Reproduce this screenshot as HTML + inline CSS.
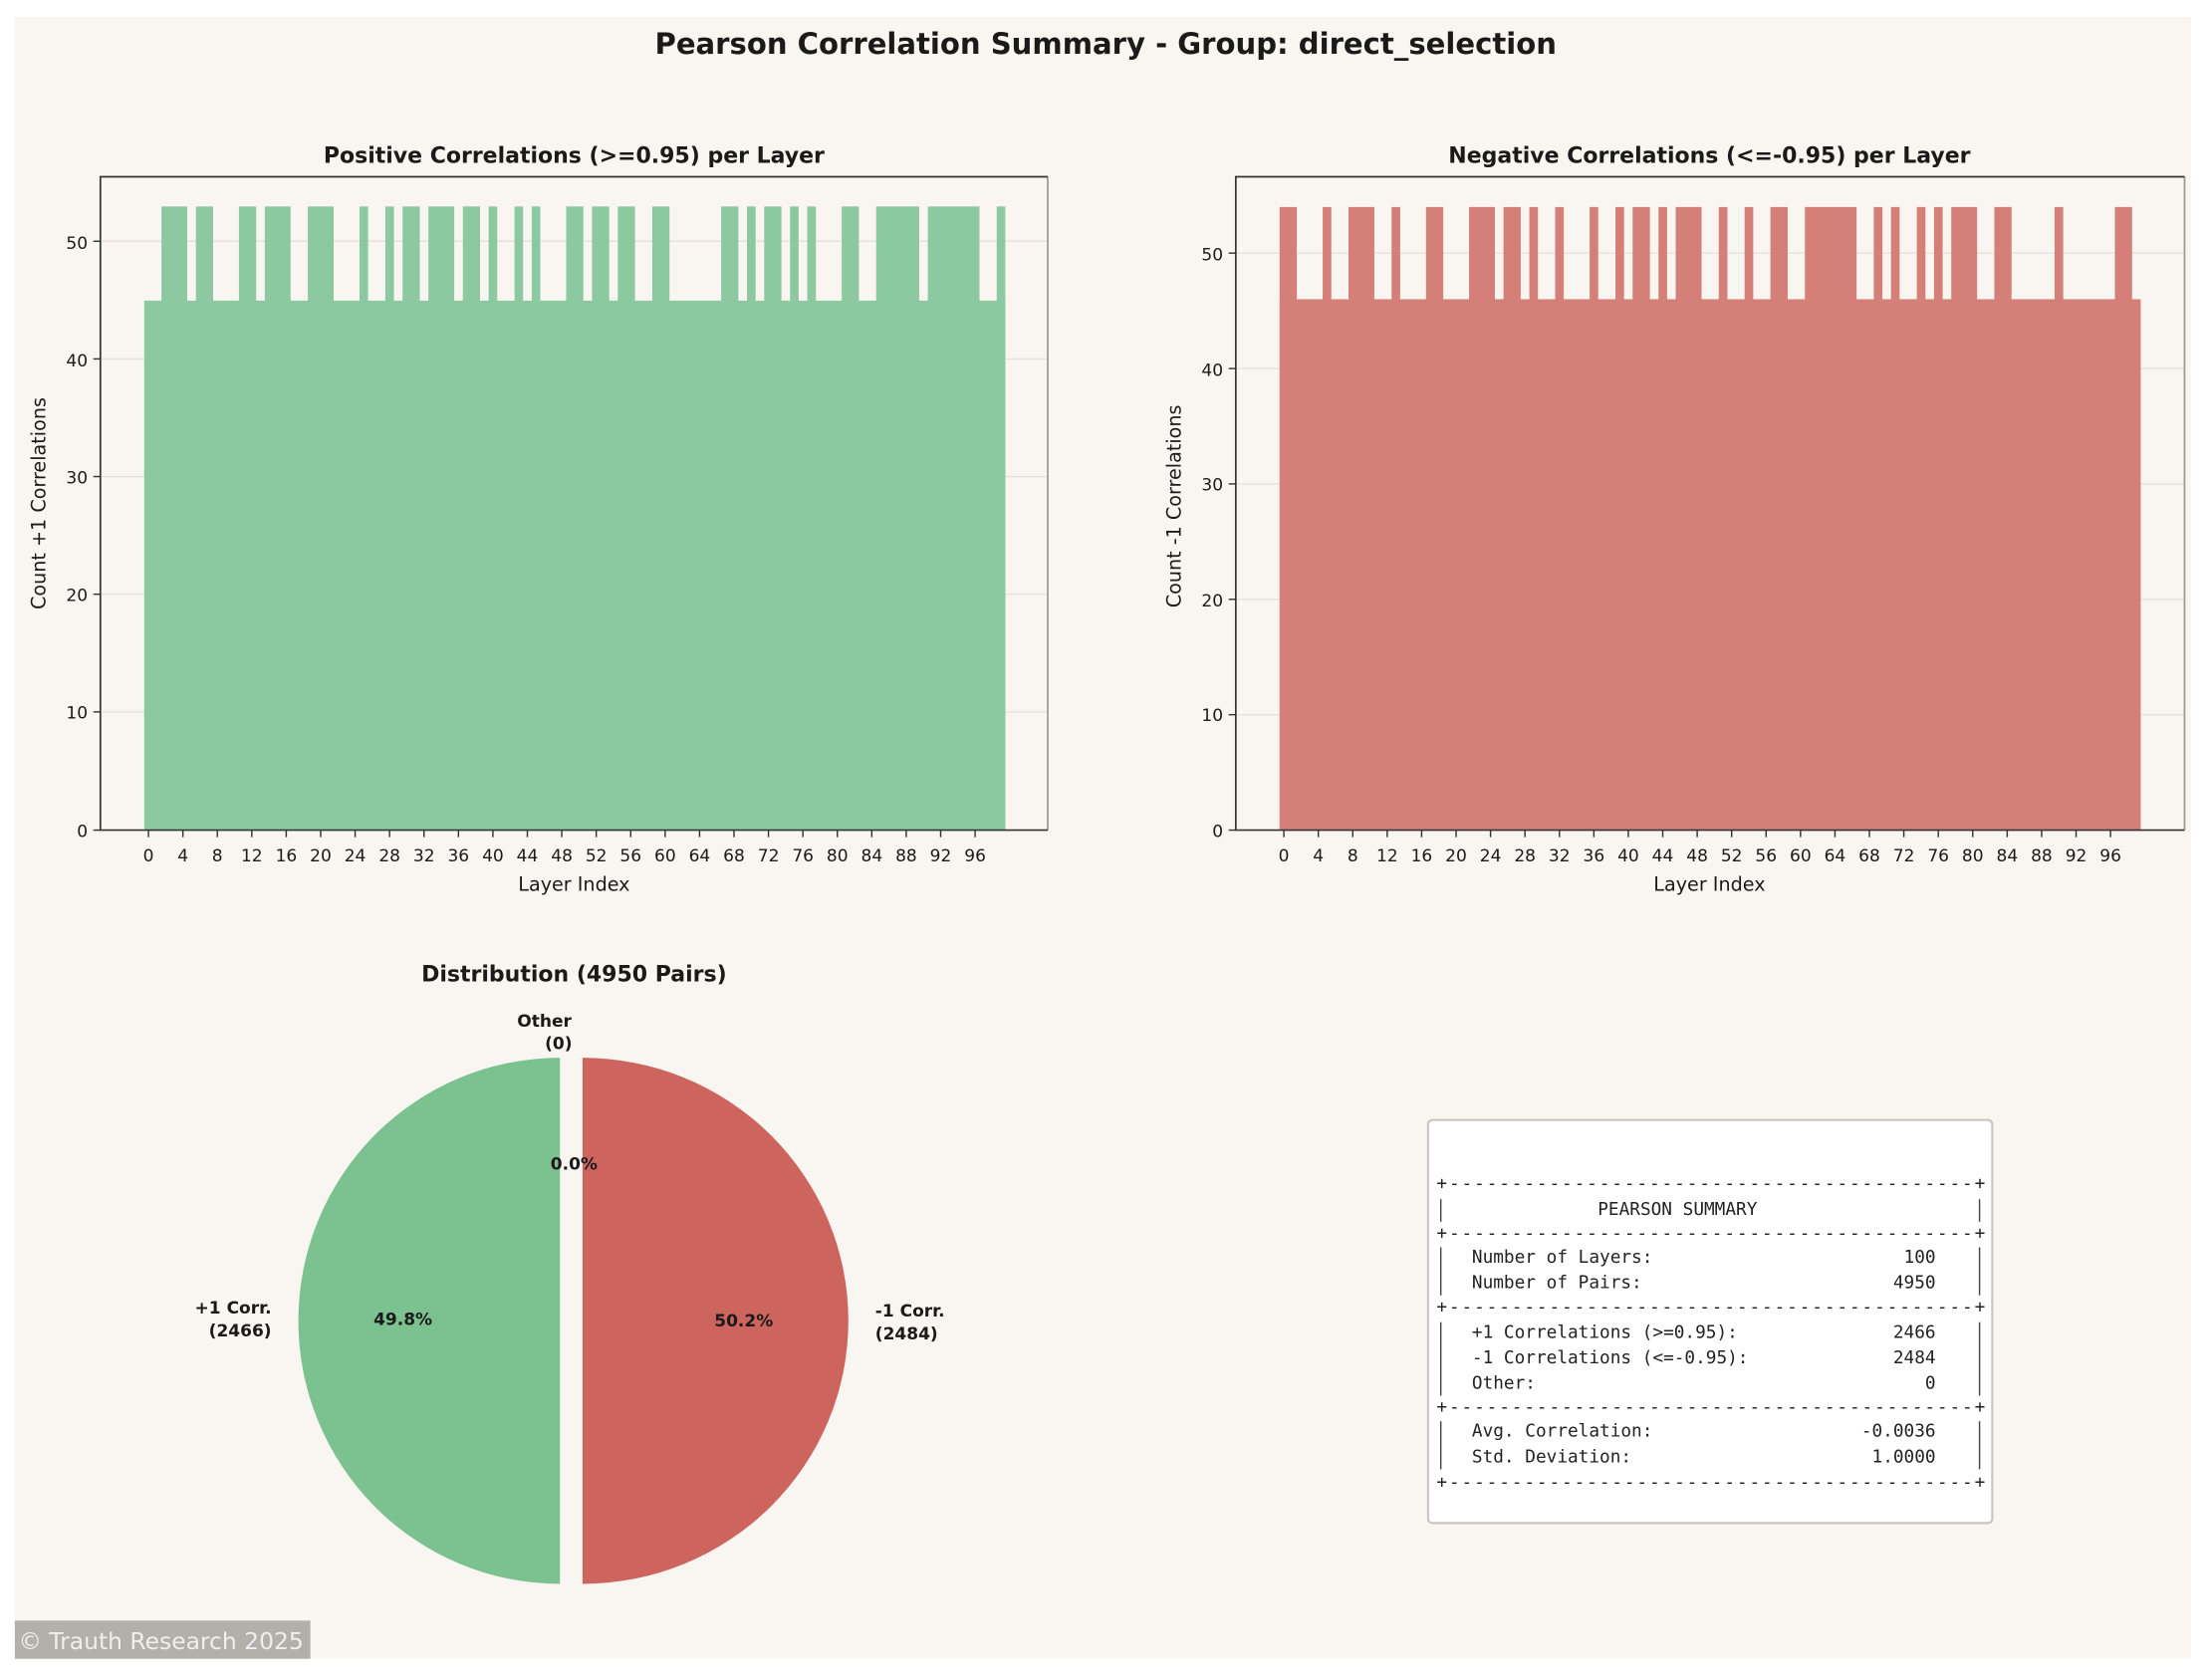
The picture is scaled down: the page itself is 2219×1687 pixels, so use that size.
<!DOCTYPE html>
<html><head><meta charset="utf-8"><style>
html,body{margin:0;padding:0;background:#fff;}
svg{display:block;}
text{font-family:"DejaVu Sans","Liberation Sans",sans-serif;fill:#1a1a1a;}
.mono text{font-family:"DejaVu Sans Mono","Liberation Mono",monospace;font-size:12.5px;fill:#222;}
.tk{font-size:12px;fill:#333;}
</style></head><body>
<svg width="2219" height="1687" viewBox="0 0 1563 1188" preserveAspectRatio="none" xmlns="http://www.w3.org/2000/svg">
<rect x="0" y="0" width="1563" height="1188" fill="#ffffff"/>
<rect x="10.5" y="12" width="1539" height="1160.7" fill="#f9f5f0"/>
<text x="782" y="38" text-anchor="middle" font-size="20.5" font-weight="bold">Pearson Correlation Summary - Group: direct_selection</text>

<!-- LEFT PLOT -->
<text x="406" y="115" text-anchor="middle" font-size="15.5" font-weight="bold">Positive Correlations (&gt;=0.95) per Layer</text>
<g stroke="#e6e1dc" stroke-width="1">
<line x1="71" x2="741" y1="170.6" y2="170.6"/><line x1="71" x2="741" y1="253.8" y2="253.8"/><line x1="71" x2="741" y1="337" y2="337"/><line x1="71" x2="741" y1="420.2" y2="420.2"/><line x1="71" x2="741" y1="503.4" y2="503.4"/>
</g>
<g fill="#8dc9a0" transform="translate(102,0) scale(6.09,1)">
<rect x="0" y="212.6" width="100" height="374.4"/>
<rect x="2" width="3" y="146" height="441"/><rect x="6" width="2" y="146" height="441"/><rect x="11" width="2" y="146" height="441"/><rect x="14" width="3" y="146" height="441"/><rect x="19" width="3" y="146" height="441"/><rect x="25" width="1" y="146" height="441"/><rect x="28" width="1" y="146" height="441"/><rect x="30" width="2" y="146" height="441"/><rect x="33" width="3" y="146" height="441"/><rect x="37" width="2" y="146" height="441"/><rect x="40" width="1" y="146" height="441"/><rect x="43" width="1" y="146" height="441"/><rect x="45" width="1" y="146" height="441"/><rect x="49" width="2" y="146" height="441"/><rect x="52" width="2" y="146" height="441"/><rect x="55" width="2" y="146" height="441"/><rect x="59" width="2" y="146" height="441"/><rect x="67" width="2" y="146" height="441"/><rect x="70" width="1" y="146" height="441"/><rect x="72" width="2" y="146" height="441"/><rect x="75" width="1" y="146" height="441"/><rect x="77" width="1" y="146" height="441"/><rect x="81" width="2" y="146" height="441"/><rect x="85" width="5" y="146" height="441"/><rect x="91" width="6" y="146" height="441"/><rect x="99" width="1" y="146" height="441"/>
</g>
<g fill="none" stroke-width="1.2">
<path d="M741,125 L741,587" stroke="#999"/>
<path d="M741,125 L71,125 L71,587 L741,587" stroke="#333"/>
</g>
<g stroke="#333" stroke-width="1">
<line x1="66" x2="71" y1="587" y2="587"/><line x1="66" x2="71" y1="503.4" y2="503.4"/><line x1="66" x2="71" y1="420.2" y2="420.2"/><line x1="66" x2="71" y1="337" y2="337"/><line x1="66" x2="71" y1="253.8" y2="253.8"/><line x1="66" x2="71" y1="170.6" y2="170.6"/>
</g>
<g class="tk" text-anchor="end">
<text x="62" y="592">0</text><text x="62" y="508">10</text><text x="62" y="425">20</text><text x="62" y="342">30</text><text x="62" y="259">40</text><text x="62" y="176">50</text>
</g>
<g transform="translate(105,0)">
<g stroke="#333" stroke-width="1">
<line x1="0" x2="0" y1="587" y2="592"/><line x1="24.36" x2="24.36" y1="587" y2="592"/><line x1="48.72" x2="48.72" y1="587" y2="592"/><line x1="73.08" x2="73.08" y1="587" y2="592"/><line x1="97.44" x2="97.44" y1="587" y2="592"/><line x1="121.8" x2="121.8" y1="587" y2="592"/><line x1="146.16" x2="146.16" y1="587" y2="592"/><line x1="170.52" x2="170.52" y1="587" y2="592"/><line x1="194.88" x2="194.88" y1="587" y2="592"/><line x1="219.24" x2="219.24" y1="587" y2="592"/><line x1="243.6" x2="243.6" y1="587" y2="592"/><line x1="267.96" x2="267.96" y1="587" y2="592"/><line x1="292.32" x2="292.32" y1="587" y2="592"/><line x1="316.68" x2="316.68" y1="587" y2="592"/><line x1="341.04" x2="341.04" y1="587" y2="592"/><line x1="365.4" x2="365.4" y1="587" y2="592"/><line x1="389.76" x2="389.76" y1="587" y2="592"/><line x1="414.12" x2="414.12" y1="587" y2="592"/><line x1="438.48" x2="438.48" y1="587" y2="592"/><line x1="462.84" x2="462.84" y1="587" y2="592"/><line x1="487.2" x2="487.2" y1="587" y2="592"/><line x1="511.56" x2="511.56" y1="587" y2="592"/><line x1="535.92" x2="535.92" y1="587" y2="592"/><line x1="560.28" x2="560.28" y1="587" y2="592"/><line x1="584.64" x2="584.64" y1="587" y2="592"/>
</g>
<g class="tk" text-anchor="middle">
<text x="0" y="609">0</text><text x="24.36" y="609">4</text><text x="48.72" y="609">8</text><text x="73.08" y="609">12</text><text x="97.44" y="609">16</text><text x="121.8" y="609">20</text><text x="146.16" y="609">24</text><text x="170.52" y="609">28</text><text x="194.88" y="609">32</text><text x="219.24" y="609">36</text><text x="243.6" y="609">40</text><text x="267.96" y="609">44</text><text x="292.32" y="609">48</text><text x="316.68" y="609">52</text><text x="341.04" y="609">56</text><text x="365.4" y="609">60</text><text x="389.76" y="609">64</text><text x="414.12" y="609">68</text><text x="438.48" y="609">72</text><text x="462.84" y="609">76</text><text x="487.2" y="609">80</text><text x="511.56" y="609">84</text><text x="535.92" y="609">88</text><text x="560.28" y="609">92</text><text x="584.64" y="609">96</text>
</g></g>
<text x="406" y="630" text-anchor="middle" font-size="13.5" fill="#333">Layer Index</text>
<text transform="translate(32,356) rotate(-90)" text-anchor="middle" font-size="13.5" fill="#333">Count +1 Correlations</text>

<!-- RIGHT PLOT -->
<text x="1209" y="115" text-anchor="middle" font-size="15.5" font-weight="bold">Negative Correlations (&lt;=-0.95) per Layer</text>
<g stroke="#e6e1dc" stroke-width="1">
<line x1="874" x2="1545" y1="179" y2="179"/><line x1="874" x2="1545" y1="260.6" y2="260.6"/><line x1="874" x2="1545" y1="342.2" y2="342.2"/><line x1="874" x2="1545" y1="423.8" y2="423.8"/><line x1="874" x2="1545" y1="505.4" y2="505.4"/>
</g>
<g fill="#d57f79" transform="translate(905,0) scale(6.09,1)">
<rect x="0" y="211.6" width="100" height="375.4"/>
<rect x="0" width="2" y="146.4" height="440.6"/><rect x="5" width="1" y="146.4" height="440.6"/><rect x="8" width="3" y="146.4" height="440.6"/><rect x="13" width="1" y="146.4" height="440.6"/><rect x="17" width="2" y="146.4" height="440.6"/><rect x="22" width="3" y="146.4" height="440.6"/><rect x="26" width="2" y="146.4" height="440.6"/><rect x="29" width="1" y="146.4" height="440.6"/><rect x="32" width="1" y="146.4" height="440.6"/><rect x="36" width="1" y="146.4" height="440.6"/><rect x="39" width="1" y="146.4" height="440.6"/><rect x="41" width="2" y="146.4" height="440.6"/><rect x="44" width="1" y="146.4" height="440.6"/><rect x="46" width="3" y="146.4" height="440.6"/><rect x="51" width="1" y="146.4" height="440.6"/><rect x="54" width="1" y="146.4" height="440.6"/><rect x="57" width="2" y="146.4" height="440.6"/><rect x="61" width="6" y="146.4" height="440.6"/><rect x="69" width="1" y="146.4" height="440.6"/><rect x="71" width="1" y="146.4" height="440.6"/><rect x="74" width="1" y="146.4" height="440.6"/><rect x="76" width="1" y="146.4" height="440.6"/><rect x="78" width="3" y="146.4" height="440.6"/><rect x="83" width="2" y="146.4" height="440.6"/><rect x="90" width="1" y="146.4" height="440.6"/><rect x="97" width="2" y="146.4" height="440.6"/>
</g>
<g fill="none" stroke-width="1.2">
<path d="M1545,125 L1545,587" stroke="#999"/>
<path d="M1545,125 L874,125 L874,587 L1545,587" stroke="#333"/>
</g>
<g stroke="#333" stroke-width="1">
<line x1="869" x2="874" y1="587" y2="587"/><line x1="869" x2="874" y1="505.4" y2="505.4"/><line x1="869" x2="874" y1="423.8" y2="423.8"/><line x1="869" x2="874" y1="342.2" y2="342.2"/><line x1="869" x2="874" y1="260.6" y2="260.6"/><line x1="869" x2="874" y1="179" y2="179"/>
</g>
<g class="tk" text-anchor="end">
<text x="865" y="592">0</text><text x="865" y="510">10</text><text x="865" y="429">20</text><text x="865" y="347">30</text><text x="865" y="266">40</text><text x="865" y="184">50</text>
</g>
<g transform="translate(908,0)">
<g stroke="#333" stroke-width="1">
<line x1="0" x2="0" y1="587" y2="592"/><line x1="24.36" x2="24.36" y1="587" y2="592"/><line x1="48.72" x2="48.72" y1="587" y2="592"/><line x1="73.08" x2="73.08" y1="587" y2="592"/><line x1="97.44" x2="97.44" y1="587" y2="592"/><line x1="121.8" x2="121.8" y1="587" y2="592"/><line x1="146.16" x2="146.16" y1="587" y2="592"/><line x1="170.52" x2="170.52" y1="587" y2="592"/><line x1="194.88" x2="194.88" y1="587" y2="592"/><line x1="219.24" x2="219.24" y1="587" y2="592"/><line x1="243.6" x2="243.6" y1="587" y2="592"/><line x1="267.96" x2="267.96" y1="587" y2="592"/><line x1="292.32" x2="292.32" y1="587" y2="592"/><line x1="316.68" x2="316.68" y1="587" y2="592"/><line x1="341.04" x2="341.04" y1="587" y2="592"/><line x1="365.4" x2="365.4" y1="587" y2="592"/><line x1="389.76" x2="389.76" y1="587" y2="592"/><line x1="414.12" x2="414.12" y1="587" y2="592"/><line x1="438.48" x2="438.48" y1="587" y2="592"/><line x1="462.84" x2="462.84" y1="587" y2="592"/><line x1="487.2" x2="487.2" y1="587" y2="592"/><line x1="511.56" x2="511.56" y1="587" y2="592"/><line x1="535.92" x2="535.92" y1="587" y2="592"/><line x1="560.28" x2="560.28" y1="587" y2="592"/><line x1="584.64" x2="584.64" y1="587" y2="592"/>
</g>
<g class="tk" text-anchor="middle">
<text x="0" y="609">0</text><text x="24.36" y="609">4</text><text x="48.72" y="609">8</text><text x="73.08" y="609">12</text><text x="97.44" y="609">16</text><text x="121.8" y="609">20</text><text x="146.16" y="609">24</text><text x="170.52" y="609">28</text><text x="194.88" y="609">32</text><text x="219.24" y="609">36</text><text x="243.6" y="609">40</text><text x="267.96" y="609">44</text><text x="292.32" y="609">48</text><text x="316.68" y="609">52</text><text x="341.04" y="609">56</text><text x="365.4" y="609">60</text><text x="389.76" y="609">64</text><text x="414.12" y="609">68</text><text x="438.48" y="609">72</text><text x="462.84" y="609">76</text><text x="487.2" y="609">80</text><text x="511.56" y="609">84</text><text x="535.92" y="609">88</text><text x="560.28" y="609">92</text><text x="584.64" y="609">96</text>
</g></g>
<text x="1209" y="630" text-anchor="middle" font-size="13.5" fill="#333">Layer Index</text>
<text transform="translate(835,358) rotate(-90)" text-anchor="middle" font-size="13.5" fill="#333">Count -1 Correlations</text>

<!-- PIE -->
<text x="406" y="694" text-anchor="middle" font-size="15.5" font-weight="bold">Distribution (4950 Pairs)</text>
<path d="M396,934 L396,748 A185,186 0 0 0 396,1120 Z" fill="#7cc190"/>
<path d="M412,934 L412,748 A188,186 0 0 1 412,1120 Z" fill="#cd645e"/>
<g font-size="12" font-weight="bold" text-anchor="middle">
<text x="385" y="726">Other</text>
<text x="395" y="742">(0)</text>
<text x="406" y="827">0.0%</text>
<text x="285" y="937">49.8%</text>
<text x="526" y="938">50.2%</text>
</g>
<g font-size="12" font-weight="bold">
<text x="192" y="929" text-anchor="end">+1 Corr.</text>
<text x="192" y="945" text-anchor="end">(2466)</text>
<text x="619" y="931">-1 Corr.</text>
<text x="619" y="947">(2484)</text>
</g>

<!-- SUMMARY BOX -->
<rect x="1010" y="792" width="399" height="285" rx="3" fill="#ffffff" stroke="#c9c4be" stroke-width="1.5"/>
<g class="mono">
<text x="1016" y="841" textLength="388" lengthAdjust="spacing">+------------------------------------------+</text>
<text x="1016" y="876" textLength="388" lengthAdjust="spacing">+------------------------------------------+</text>
<text x="1016" y="928" textLength="388" lengthAdjust="spacing">+------------------------------------------+</text>
<text x="1016" y="999" textLength="388" lengthAdjust="spacing">+------------------------------------------+</text>
<text x="1016" y="1052" textLength="388" lengthAdjust="spacing">+------------------------------------------+</text>
<text x="1130" y="859">PEARSON SUMMARY</text>
<text x="1041" y="893">Number of Layers:</text><text x="1369" y="893" text-anchor="end">100</text>
<text x="1041" y="911">Number of Pairs:</text><text x="1369" y="911" text-anchor="end">4950</text>
<text x="1041" y="946">+1 Correlations (&gt;=0.95):</text><text x="1369" y="946" text-anchor="end">2466</text>
<text x="1041" y="964">-1 Correlations (&lt;=-0.95):</text><text x="1369" y="964" text-anchor="end">2484</text>
<text x="1041" y="982">Other:</text><text x="1369" y="982" text-anchor="end">0</text>
<text x="1041" y="1016">Avg. Correlation:</text><text x="1369" y="1016" text-anchor="end">-0.0036</text>
<text x="1041" y="1034">Std. Deviation:</text><text x="1369" y="1034" text-anchor="end">1.0000</text>
</g>
<g stroke="#444" stroke-width="1">
<line x1="1019" x2="1019" y1="848" y2="864"/><line x1="1400" x2="1400" y1="848" y2="864"/>
<line x1="1019" x2="1019" y1="882" y2="916"/><line x1="1400" x2="1400" y1="882" y2="916"/>
<line x1="1019" x2="1019" y1="935" y2="987"/><line x1="1400" x2="1400" y1="935" y2="987"/>
<line x1="1019" x2="1019" y1="1005" y2="1039"/><line x1="1400" x2="1400" y1="1005" y2="1039"/>
</g>

<!-- WATERMARK -->
<rect x="10.5" y="1146" width="209" height="27" fill="#b3b0ac"/>
<text x="13" y="1166" font-size="16.5" style="fill:#efefef">© Trauth Research 2025</text>
</svg>
</body></html>
